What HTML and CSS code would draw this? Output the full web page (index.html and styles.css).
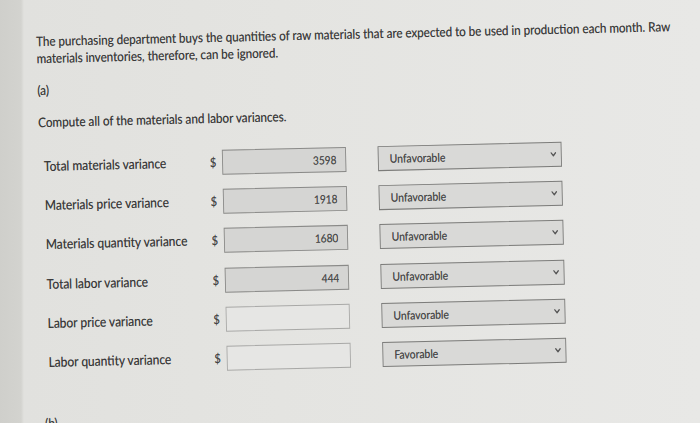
FILE: index.html
```html
<!DOCTYPE html>
<html lang="en">
<head>
<meta charset="utf-8">
<title>Variances</title>
<link rel="stylesheet" href="styles.css">
</head>
<body>
<main class="sheet">
  <p class="intro">The purchasing department buys the quantities of raw materials that are expected to be used in production each month. Raw materials inventories, therefore, can be ignored.</p>
  <p class="part">(a)</p>
  <p class="prompt">Compute all of the materials and labor variances.</p>
  <div class="rows">
    <div class="row">
      <span class="label">Total materials variance</span>
      <span class="cur">$</span>
      <input class="amount filled" type="text" value="3598" readonly>
      <div class="select"><span>Unfavorable</span><svg class="chev" viewBox="0 0 8 6" width="7" height="5"><polyline points="1,1 4,4.5 7,1"/></svg></div>
    </div>
    <div class="row">
      <span class="label">Materials price variance</span>
      <span class="cur">$</span>
      <input class="amount filled" type="text" value="1918" readonly>
      <div class="select"><span>Unfavorable</span><svg class="chev" viewBox="0 0 8 6" width="7" height="5"><polyline points="1,1 4,4.5 7,1"/></svg></div>
    </div>
    <div class="row">
      <span class="label">Materials quantity variance</span>
      <span class="cur">$</span>
      <input class="amount filled" type="text" value="1680" readonly>
      <div class="select"><span>Unfavorable</span><svg class="chev" viewBox="0 0 8 6" width="7" height="5"><polyline points="1,1 4,4.5 7,1"/></svg></div>
    </div>
    <div class="row">
      <span class="label">Total labor variance</span>
      <span class="cur">$</span>
      <input class="amount filled" type="text" value="444" readonly>
      <div class="select"><span>Unfavorable</span><svg class="chev" viewBox="0 0 8 6" width="7" height="5"><polyline points="1,1 4,4.5 7,1"/></svg></div>
    </div>
    <div class="row">
      <span class="label">Labor price variance</span>
      <span class="cur">$</span>
      <input class="amount" type="text" value="" readonly>
      <div class="select"><span>Unfavorable</span><svg class="chev" viewBox="0 0 8 6" width="7" height="5"><polyline points="1,1 4,4.5 7,1"/></svg></div>
    </div>
    <div class="row">
      <span class="label">Labor quantity variance</span>
      <span class="cur">$</span>
      <input class="amount" type="text" value="" readonly>
      <div class="select"><span>Favorable</span><svg class="chev" viewBox="0 0 8 6" width="7" height="5"><polyline points="1,1 4,4.5 7,1"/></svg></div>
    </div>
  </div>
  <p class="part part-b">(b)</p>
</main>
</body>
</html>
```
FILE: styles.css
```css
html, body {
  margin: 0;
  height: 100%;
}

body {
  overflow: hidden;
  background: linear-gradient(to right, #cfcfcb 0, #d3d3cf 21px, #e1e1de 24px, #e4e4e1 40%, #e8e8e6 100%);
  font-family: Lato, "Open Sans", sans-serif;
  color: #383838;
}

.sheet {
  box-sizing: border-box;
  width: 820px;
  padding: 34px 0 0 40px;
  transform-origin: 0 0;
  transform: rotate(-1.35deg) scaleX(0.88);
  text-shadow: 0 0 0.5px rgba(40, 40, 40, 0.5);
}

.intro,
.part,
.prompt {
  margin: 0;
  font-size: 13.2px;
  line-height: 17px;
}

.intro {
  width: 740px;
}

.part {
  margin-top: 15px;
}

.prompt {
  margin-top: 15px;
  font-size: 13.3px;
}

.rows {
  display: flex;
  flex-direction: column;
  gap: 14.2px;
  margin: 23px 0 0 5.5px;
}

.row {
  display: grid;
  grid-template-columns: 188.5px 14px 176.5px 209.5px;
  align-items: center;
  height: 25px;
}

.label {
  font-size: 13.6px;
  line-height: 17px;
}

.cur {
  font-size: 12.5px;
  color: #444;
}

.amount {
  box-sizing: border-box;
  width: 141px;
  height: 25px;
  margin: 0;
  padding: 0 10px 0 4px;
  border: 1px solid #a8a8a6;
  background: #e6e6e4;
  font-family: Lato, "Open Sans", sans-serif;
  font-size: 11.5px;
  color: #4a4a4a;
  text-align: right;
  outline: none;
  text-shadow: 0 0 0.5px rgba(40, 40, 40, 0.5);
}

.amount.filled {
  border-color: #8a8a88;
  background: #d5d5d3;
}

.select {
  box-sizing: border-box;
  height: 25px;
  display: flex;
  align-items: center;
  justify-content: space-between;
  padding: 0 5px 0 13px;
  border: 1px solid #7c7c7a;
  background: #d9d9d7;
  font-size: 11.8px;
  color: #474747;
}

.chev {
  fill: none;
  stroke: #555;
  stroke-width: 1.7;
  stroke-linecap: round;
  stroke-linejoin: round;
}

.part-b {
  margin-top: 40px;
}
```
